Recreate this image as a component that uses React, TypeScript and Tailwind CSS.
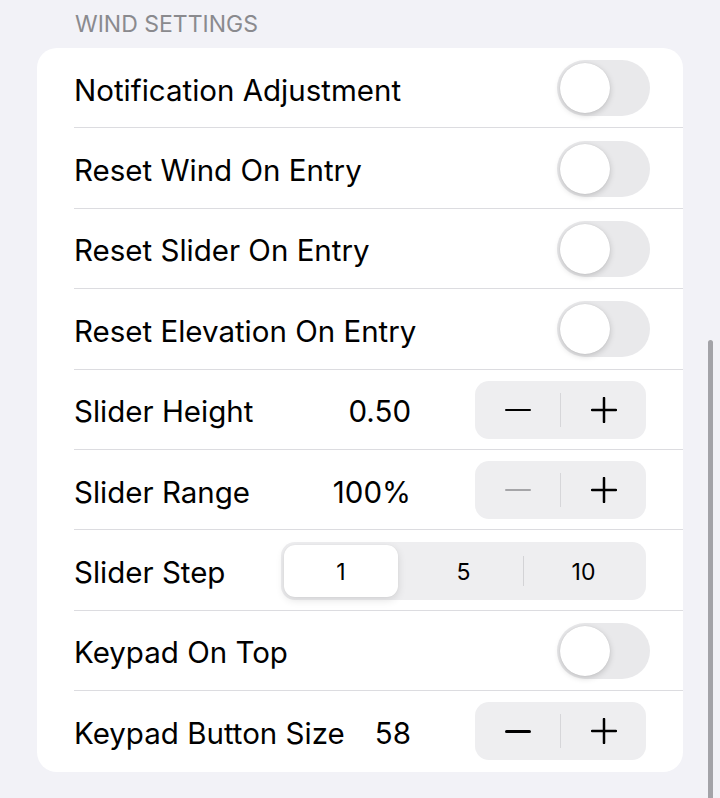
import React, { useState } from 'react';

const font = { fontFamily: 'Inter, "Noto Sans", sans-serif' };

function Toggle() {
  const [on, setOn] = useState(false);
  return (
    <button
      onClick={() => setOn(!on)}
      className={`relative w-[93px] h-[56px] rounded-full shrink-0 ${on ? 'bg-[#34c759]' : 'bg-[#e9e9eb]'}`}
    >
      <span
        className={`absolute top-[3px] w-[50px] h-[50px] rounded-full bg-white shadow-[0_2px_6px_rgba(0,0,0,0.18),0_0_1px_rgba(0,0,0,0.12)] ${on ? 'left-[40px]' : 'left-[3px]'}`}
      />
    </button>
  );
}

function Stepper({ minusDisabled = false }) {
  return (
    <div className="flex items-center w-[171px] h-[58px] rounded-[14px] bg-[#eeeef0] shrink-0">
      <div className="flex-1 flex items-center justify-center">
        <div className={`w-[26px] h-[2.5px] rounded ${minusDisabled ? 'bg-[#a5a5a8]' : 'bg-black'}`} />
      </div>
      <div className="w-px h-[34px] bg-[#d6d6d9]" />
      <div className="flex-1 flex items-center justify-center">
        <svg width="26" height="26" viewBox="0 0 26 26">
          <path d="M13 1v24M1 13h24" stroke="black" strokeWidth="2.5" strokeLinecap="round" />
        </svg>
      </div>
    </div>
  );
}

function Segmented() {
  const [sel, setSel] = useState(0);
  const opts = ['1', '5', '10'];
  return (
    <div className="flex items-center w-[365px] h-[58px] rounded-[14px] bg-[#eeeef0] p-[3px] shrink-0">
      {opts.map((o, i) => (
        <React.Fragment key={o}>
          {i > 0 && <div className={`w-px h-[30px] ${sel === i || sel === i - 1 ? 'bg-transparent' : 'bg-[#d3d3d6]'}`} />}
          <button onClick={() => setSel(i)} className="flex-1 h-full flex">
            <span
              className={`flex-1 flex items-center justify-center pt-[4px] rounded-[11px] text-[23px] text-black ${i === 0 ? 'mr-[5px]' : ''} ${sel === i ? 'bg-white shadow-[0_3px_8px_rgba(0,0,0,0.12),0_0_1px_rgba(0,0,0,0.1)]' : ''}`}
            >
              {o}
            </span>
          </button>
        </React.Fragment>
      ))}
    </div>
  );
}

function Row({ label, value, children, last = false }) {
  return (
    <div className="pl-[37px] h-[80.4px] relative flex items-center">
      <span className="text-[29.5px] text-black pt-[3px] whitespace-nowrap">{label}</span>
      {value !== undefined && (
        <span className="absolute right-[272px] pt-[3px] text-[29.5px] text-black">{value}</span>
      )}
      <div className="ml-auto pr-[33px] flex items-center">{children}</div>
      {!last && <div className="absolute left-[37px] right-0 bottom-0 h-px bg-[#dcdce0]" />}
    </div>
  );
}

export default function App() {
  return (
    <div className="relative w-[720px] h-[798px] bg-[#f2f2f7] overflow-hidden" style={font}>
      <div className="pl-[75px] pt-[7px] h-[48px] text-[23px] text-[#8a8a8e]">WIND SETTINGS</div>
      <div className="ml-[37px] w-[646px] bg-white rounded-[20px]">
        <Row label="Notification Adjustment"><Toggle /></Row>
        <Row label="Reset Wind On Entry"><Toggle /></Row>
        <Row label="Reset Slider On Entry"><Toggle /></Row>
        <Row label="Reset Elevation On Entry"><Toggle /></Row>
        <Row label="Slider Height" value="0.50"><div className="pr-[4px]"><Stepper /></div></Row>
        <Row label="Slider Range" value="100%"><div className="pr-[4px]"><Stepper minusDisabled /></div></Row>
        <Row label="Slider Step"><div className="pr-[4px]"><Segmented /></div></Row>
        <Row label="Keypad On Top"><Toggle /></Row>
        <Row label="Keypad Button Size" value="58" last><div className="pr-[4px]"><Stepper /></div></Row>
      </div>
      <div className="absolute left-[708px] top-[340px] w-[5px] h-[470px] rounded-full bg-[#a3a3a8]" />
    </div>
  );
}
